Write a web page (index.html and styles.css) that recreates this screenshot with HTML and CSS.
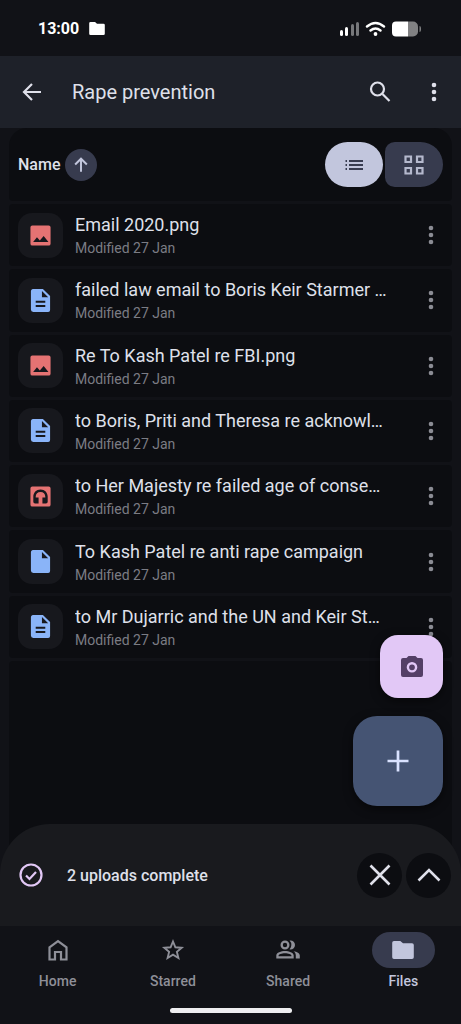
FILE: index.html
```html
<!DOCTYPE html>
<html lang="en">
<head>
<meta charset="utf-8">
<meta name="viewport" content="width=device-width, initial-scale=1">
<title>Rape prevention</title>
<link rel="stylesheet" href="styles.css">
</head>
<body>
<svg class="sprite" aria-hidden="true">
  <symbol id="more" viewBox="0 0 6 20"><circle cx="3" cy="3" r="2.3"/><circle cx="3" cy="10" r="2.3"/><circle cx="3" cy="17" r="2.3"/></symbol>
  <symbol id="image" viewBox="0 0 24 24"><path fill-rule="evenodd" d="M3.500 1.500h17a2 2 0 0 1 2 2v17a2 2 0 0 1-2 2h-17a2 2 0 0 1-2-2v-17a2 2 0 0 1 2-2zM4.300 18.800h16l-5-6.300-4 4.600-3-3.200z"/></symbol>
  <symbol id="doc" viewBox="0 0 20 24"><path fill-rule="evenodd" d="M3 0h9.500L20 7.300V22a2 2 0 0 1-2 2H2.500A2.500 2.500 0 0 1 0 21.500v-19A2.500 2.500 0 0 1 3 0zM11.500 2v6.500H18zM5 12.300v2h10v-2zM5 16.700v2h10v-2z"/></symbol>
  <symbol id="file" viewBox="0 0 20 24"><path fill-rule="evenodd" d="M3 0h9.500L20 7.300V22a2 2 0 0 1-2 2H2.500A2.500 2.500 0 0 1 0 21.500v-19A2.500 2.500 0 0 1 3 0zM11.500 2v6.500H18z"/></symbol>
  <symbol id="audio" viewBox="0 0 24 24"><path fill-rule="evenodd" d="M3.500 1.500h17a2 2 0 0 1 2 2v17a2 2 0 0 1-2 2h-17a2 2 0 0 1-2-2v-17a2 2 0 0 1 2-2zM12 4.700c-4.500 0-7.500 3.300-7.500 7.600v5.200q0 1.800 1.800 1.800H10V13H7v-.7c0-2.800 2-4.900 5-4.900s5 2.100 5 4.900v.7h-3v6.300h3.700q1.800 0 1.800-1.800v-5.200c0-4.300-3-7.600-7.500-7.600z"/></symbol>
  <symbol id="folder" viewBox="0 0 24 20"><path d="M2 0h7l3 2.500h10a2 2 0 0 1 2 2V18a2 2 0 0 1-2 2H2a2 2 0 0 1-2-2V2a2 2 0 0 1 2-2z"/></symbol>
</svg>
<div class="app">
  <div class="status">
    <div class="status-side"><span class="clock">13:00</span><svg class="status-folder"><use href="#folder"/></svg></div>
    <svg class="indicators" viewBox="0 0 84 18" aria-hidden="true">
      <rect x="1" y="11" width="3" height="6" rx="1.500" fill="#fff"/><rect x="6" y="8" width="3" height="9" rx="1.500" fill="#fff"/><rect x="12" y="5" width="3" height="12" rx="1.500" fill="#77787b"/><rect x="17" y="3" width="3" height="14" rx="1.500" fill="#77787b"/>
      <g fill="none" stroke="#fff" stroke-width="2.400" stroke-linecap="round"><path d="M28 7.500Q36.500 .5 45 7.500M31.500 11.500Q36.500 7.500 41.500 11.500"/></g><circle cx="36.500" cy="15" r="1.900" fill="#fff"/>
      <path d="M69 2.500h5a5 5 0 0 1 5 5v5a5 5 0 0 1-5 5h-5z" fill="#818183"/><path d="M69 2.500h-12a4 4 0 0 0-4 4v7a4 4 0 0 0 4 4h12z" fill="#fff"/><path d="M80.500 7q1.500 0 1.500 3t-1.500 3z" fill="#818183"/>
    </svg>
  </div>
  <header class="appbar">
    <button class="bare" aria-label="Back"><svg class="i24 line" viewBox="0 0 24 24"><path d="M21 12H4.500M12 4L4 12l8 8"/></svg></button>
    <h1>Rape prevention</h1>
    <button class="bare" aria-label="Search"><svg class="i24 line" viewBox="0 0 24 24"><circle cx="9.500" cy="9" r="6.500"/><path d="M14.500 14L21.500 21"/></svg></button>
    <button class="bare" aria-label="More options"><svg class="more"><use href="#more"/></svg></button>
  </header>
  <main>
    <div class="sortbar">
      <span class="sort-label">Name</span>
      <button class="sort" aria-label="Reverse sort direction"><svg class="i20 line" viewBox="0 0 20 20"><path d="M10 17.500V4M3.500 9.500L10 3l6.500 6.500"/></svg></button>
      <div class="views">
        <button class="view view-list" aria-label="List view" aria-pressed="true"><svg class="i20" viewBox="0 0 20 20"><path d="M1.500 5H3v2H1.500zM5 5h14v2H5zM1.500 9H3v2H1.500zM5 9h14v2H5zM1.500 13H3v2H1.500zM5 13h14v2H5z"/></svg></button>
        <button class="view view-grid" aria-label="Grid view" aria-pressed="false"><svg class="i20 line" viewBox="0 0 20 20"><path d="M1.500 1.500h5.500v5.500H1.500zM13 1.500h5.500v5.500H13zM1.500 13h5.500v5.500H1.500zM13 13h5.500v5.500H13z"/></svg></button>
      </div>
    </div>
    <ul class="files">
      <li><span class="tile red"><svg class="i24"><use href="#image"/></svg></span><div class="meta"><h2>Email 2020.png</h2><p>Modified 27 Jan</p></div><button class="row-more" aria-label="File options"><svg class="more"><use href="#more"/></svg></button></li>
      <li><span class="tile blue"><svg class="i24"><use href="#doc"/></svg></span><div class="meta"><h2>failed law email to Boris Keir Starmer …</h2><p>Modified 27 Jan</p></div><button class="row-more" aria-label="File options"><svg class="more"><use href="#more"/></svg></button></li>
      <li><span class="tile red"><svg class="i24"><use href="#image"/></svg></span><div class="meta"><h2>Re To Kash Patel re FBI.png</h2><p>Modified 27 Jan</p></div><button class="row-more" aria-label="File options"><svg class="more"><use href="#more"/></svg></button></li>
      <li><span class="tile blue"><svg class="i24"><use href="#doc"/></svg></span><div class="meta"><h2>to Boris, Priti and Theresa re acknowl…</h2><p>Modified 27 Jan</p></div><button class="row-more" aria-label="File options"><svg class="more"><use href="#more"/></svg></button></li>
      <li><span class="tile red"><svg class="i24"><use href="#audio"/></svg></span><div class="meta"><h2>to Her Majesty re failed age of conse…</h2><p>Modified 27 Jan</p></div><button class="row-more" aria-label="File options"><svg class="more"><use href="#more"/></svg></button></li>
      <li><span class="tile blue"><svg class="i24"><use href="#file"/></svg></span><div class="meta"><h2>To Kash Patel re anti rape campaign</h2><p>Modified 27 Jan</p></div><button class="row-more" aria-label="File options"><svg class="more"><use href="#more"/></svg></button></li>
      <li><span class="tile blue"><svg class="i24"><use href="#doc"/></svg></span><div class="meta"><h2>to Mr Dujarric and the UN and Keir St…</h2><p>Modified 27 Jan</p></div><button class="row-more" aria-label="File options"><svg class="more"><use href="#more"/></svg></button></li>
    </ul>
    <div class="rest"></div>
    <div class="fabs">
      <button class="fab scan" aria-label="Scan"><svg class="i24" viewBox="0 0 24 24"><path fill-rule="evenodd" d="M8.500 1h7L17.500 3H21a2 2 0 0 1 2 2v15a2 2 0 0 1-2 2H3a2 2 0 0 1-2-2V5a2 2 0 0 1 2-2h3.500zM12 7a5.300 5.300 0 1 0 0 10.600A5.300 5.300 0 0 0 12 7zm0 2.400a2.900 2.900 0 1 1 0 5.800 2.900 2.900 0 0 1 0-5.800z"/></svg></button>
      <button class="fab new" aria-label="New"><svg class="i24 line" viewBox="0 0 24 24"><path d="M12 1.500v21M1.500 12h21" stroke-width="2.700"/></svg></button>
    </div>
  </main>
  <section class="uploads">
    <svg class="i24 line done" viewBox="0 0 24 24"><circle cx="12" cy="12" r="10.500"/><path d="M7 12.500l3.500 3.500L17 9"/></svg>
    <p>2 uploads complete</p>
    <button class="round" aria-label="Dismiss"><svg class="i24 line" viewBox="0 0 24 24"><path d="M2.500 2.500l19 19M21.500 2.500l-19 19" stroke-width="2.600"/></svg></button>
    <button class="round" aria-label="Expand"><svg class="i24 line" viewBox="0 0 24 24"><path d="M1.500 17.500L12 7l10.500 10.500" stroke-width="2.600"/></svg></button>
  </section>
  <nav>
    <a href="#home"><span class="pill"><svg class="i24 line" viewBox="0 0 24 24"><path d="M3.500 9.300L12 3l8.500 6.300V21.500h-5.500v-7.500h-6v7.500H3.500z"/></svg></span>Home</a>
    <a href="#starred"><span class="pill"><svg class="i24 line" viewBox="0 0 24 24"><path d="M12 3.500l2.400 5.800 6.300.5-4.800 4.100 1.500 6.100-5.400-3.300-5.400 3.300 1.500-6.100-4.800-4.100 6.300-.5z" stroke-width="1.900"/></svg></span>Starred</a>
    <a href="#shared"><span class="pill"><svg class="i24" viewBox="0 0 24 24"><path fill-rule="evenodd" d="M9 2.500a4.500 4.500 0 1 0 0 9 4.500 4.500 0 0 0 0-9zm0 2.300a2.200 2.200 0 1 1 0 4.400 2.200 2.200 0 0 1 0-4.400zM.3 20.500v-3c0-3 4.800-4.500 8.700-4.500s8.700 1.500 8.700 4.500v3zm2.300-2.200h12.800v-.8c0-1.200-3-2.300-6.400-2.300s-6.400 1.100-6.400 2.300zM14.500 2.500a4.500 4.500 0 0 1 0 9l-.9-.1a6.400 6.400 0 0 0 0-8.800zM17.500 13.300c3.500.5 6.300 1.900 6.300 4.200v3h-4v-3c0-1.800-.8-3.200-2.300-4.200z"/></svg></span>Shared</a>
    <a href="#files" class="active" aria-current="page"><span class="pill"><svg class="nav-folder"><use href="#folder"/></svg></span>Files</a>
  </nav>
  <div class="handle"></div>
</div>
</body>
</html>
```
FILE: styles.css
```css
* { box-sizing: border-box; }
body {
  margin: 0;
  background: #111217;
  color: #dfe0ea;
  font-family: Roboto, "Noto Sans", sans-serif;
}
h1, h2, p, ul { margin: 0; padding: 0; font-weight: 400; }
button {
  display: grid;
  place-items: center;
  flex: none;
  padding: 0;
  border: 0;
  background: none;
  color: inherit;
}
svg { display: block; fill: currentColor; }
.sprite { position: absolute; width: 0; height: 0; }
.i24 { width: 24px; height: 24px; }
.i20 { width: 20px; height: 20px; }
.line { fill: none; stroke: currentColor; stroke-width: 2.2; }
.more { width: 6px; height: 20px; }

.app { display: flex; flex-direction: column; min-height: 100vh; }

.status {
  display: flex;
  align-items: center;
  justify-content: space-between;
  height: 56px;
  padding: 0 38px;
  color: #fff;
}
.status-side { display: flex; align-items: center; gap: 10px; }
.clock { font-size: 16px; font-weight: 700; }
.status-folder { width: 16px; height: 13px; }
.indicators { width: 84px; height: 18px; }

.appbar {
  display: flex;
  align-items: center;
  height: 72px;
  padding: 0 15px 0 20px;
  background: #1e2129;
}
.appbar h1 { flex: 1; padding-left: 28px; font-size: 20px; line-height: 28px; }
.bare { width: 24px; height: 48px; }
.bare + .bare { margin-left: 30px; }

main {
  position: relative;
  flex: 1;
  display: flex;
  flex-direction: column;
  gap: 3px;
  margin: 0 9px;
}
.sortbar, .files li, .rest { background: #0c0d11; border-radius: 4px; }
.sortbar {
  display: flex;
  align-items: center;
  gap: 5px;
  height: 73px;
  padding: 0 9px;
  border-radius: 18px 18px 4px 4px;
}
.sort-label { font-size: 16px; font-weight: 500; }
.sort { width: 32px; height: 32px; border-radius: 50%; background: #373b4e; color: #c2c6dc; }
.sort svg { width: 18px; height: 18px; }
.views { display: flex; gap: 2px; margin-left: auto; }
.view { width: 58px; height: 45px; }
.view-list { border-radius: 23px; background: #c2c6dd; color: #383c50; }
.view-grid { border-radius: 10px 23px 23px 10px; background: #373b4e; color: #b5b9cd; }

.files {
  display: grid;
  grid-auto-rows: 1fr;
  gap: 3px;
  min-height: 454px;
  list-style: none;
}
.files li { display: flex; align-items: center; padding: 0 9px; min-width: 0; }
.tile {
  display: grid;
  place-items: center;
  flex: none;
  width: 45px;
  height: 45px;
  border-radius: 14px;
  background: #17181d;
}
.tile svg { width: 23px; height: 23px; }
.red { color: #e57373; }
.blue { color: #8ab4f8; }
.meta { flex: 1; min-width: 0; padding-left: 12px; }
.meta h2 {
  overflow: hidden;
  font-size: 18px;
  line-height: 26px;
  white-space: nowrap;
}
.meta p { color: #7b7c84; font-size: 14px; line-height: 20px; }
.row-more { width: 24px; height: 45px; margin-left: 6px; color: #8b8c94; }
.rest { flex: 1; }

.fabs {
  position: absolute;
  right: 9px;
  bottom: 68px;
  display: flex;
  flex-direction: column;
  align-items: flex-end;
  gap: 18px;
}
.fab { box-shadow: 0 3px 10px #0008; }
.scan { width: 63px; height: 63px; border-radius: 18px; background: #e2c8f6; color: #543f66; }
.new { width: 90px; height: 90px; border-radius: 24px; background: #455473; color: #d9e2ff; }

.uploads {
  position: relative;
  display: flex;
  align-items: center;
  gap: 4px;
  height: 102px;
  margin-top: -50px;
  padding: 0 10px 0 19px;
  border-radius: 50px 50px 0 0;
  background: #191a1e;
}
.uploads p { flex: 1; padding-left: 20px; font-size: 16px; font-weight: 500; }
.done { color: #e2c8f6; }
.round { width: 45px; height: 45px; border-radius: 50%; background: #0c0d11; }

nav { display: flex; padding: 6px 0 0; }
nav a {
  display: flex;
  flex: 1;
  flex-direction: column;
  align-items: center;
  gap: 3px;
  color: #8e8f98;
  font-size: 14px;
  font-weight: 500;
  line-height: 20px;
  text-decoration: none;
}
.pill { display: grid; place-items: center; width: 63px; height: 36px; border-radius: 18px; }
.active { color: #c2c6dd; }
.active .pill { background: #373b4e; }
.nav-folder { width: 24px; height: 18px; }
.handle { width: 122px; height: 5px; margin: 17px auto 11px; border-radius: 3px; background: #eeeef0; }
```
